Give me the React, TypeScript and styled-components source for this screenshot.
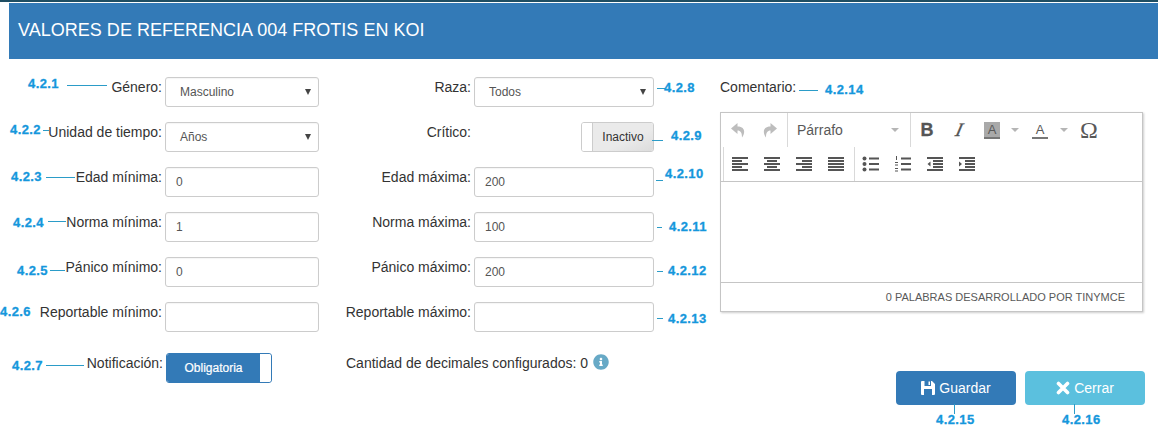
import React from "react";
import styled, { createGlobalStyle } from "styled-components";
import { FaInfoCircle } from "react-icons/fa";

const Global = createGlobalStyle`
  html, body { margin: 0; padding: 0; background: #fff; }
  body { font-family: "Liberation Sans", Arial, sans-serif; color: #333; font-size: 14px; }
  * { box-sizing: border-box; }
`;

const Page = styled.div`
  position: relative;
  width: 1158px;
  height: 427px;
  overflow: hidden;
  background: #fff;
`;
const TopLine = styled.div`
  height: 2px;
  margin-bottom: 1px;
  background: #1f4e63;
`;
const Header = styled.h1`
  margin: 0 0 18px 9px;
  height: 56px;
  background: #337ab7;
  color: #fff;
  font-size: 18px;
  font-weight: 400;
  line-height: 54px;
  padding-left: 9px;
  letter-spacing: 0.02px;
`;
const Body = styled.div`
  display: flex;
  align-items: flex-start;
`;
const Column = styled.div<{ $width: number; $gap: number }>`
  width: ${(p) => p.$width}px;
  margin-right: ${(p) => p.$gap}px;
  flex: none;
  display: flex;
  flex-direction: column;
  gap: 15px;
`;
const Row = styled.div`
  display: flex;
  justify-content: flex-end;
  height: 30px;
`;
const Label = styled.label`
  font-size: 14px;
  line-height: 20px;
  color: #333;
  margin-right: 3px;
`;
const SelectBox = styled.div<{ $width: number }>`
  width: ${(p) => p.$width}px;
  height: 30px;
  border: 1px solid #ccc;
  border-radius: 3px;
  box-shadow: inset 0 1px 1px rgba(0, 0, 0, 0.04);
  background: #fff;
  padding: 0 7px 0 14px;
  font-size: 12px;
  line-height: 28px;
  color: #555;
  display: flex;
  justify-content: space-between;
  align-items: center;
`;
const Caret = styled.span`
  width: 0;
  height: 0;
  border-left: 3px solid transparent;
  border-right: 3px solid transparent;
  border-top: 6px solid #444;
`;
const InputBox = styled.div<{ $width: number }>`
  width: ${(p) => p.$width}px;
  height: 30px;
  border: 1px solid #ccc;
  border-radius: 3px;
  box-shadow: inset 0 1px 1px rgba(0, 0, 0, 0.04);
  background: #fff;
  padding: 0 10px;
  font-size: 12px;
  line-height: 29px;
  color: #555;
`;
const SwitchSpacer = styled.span`
  width: 107px;
`;
const InactiveSwitch = styled.div`
  width: 73px;
  height: 30px;
  border: 1px solid #ccc;
  border-radius: 3px;
  display: flex;
  overflow: hidden;
`;
const Knob = styled.span`
  width: 11px;
  background: #fff;
  border-right: 1px solid #ccc;
`;
const SwitchOff = styled.span`
  flex: 1;
  background: linear-gradient(to bottom right, #eaeaea 60%, #dcdcdc);
  font-size: 12px;
  line-height: 28px;
  text-align: center;
  color: #333;
`;
const ActiveSwitch = styled.div`
  width: 106px;
  height: 30px;
  border: 1px solid #337ab7;
  border-radius: 3px;
  display: flex;
  overflow: hidden;
  margin-right: 47px;
`;
const SwitchOn = styled.span`
  flex: 1;
  background: #337ab7;
  color: #fff;
  font-size: 12px;
  line-height: 28px;
  text-align: center;
  -webkit-text-stroke: 0.2px #fff;
`;
const ActiveKnob = styled.span`
  width: 11px;
  background: #fff;
  border-radius: 0 2px 2px 0;
`;
const NotifyRow = styled(Row)`
  margin-top: 6px;
`;
const Decimals = styled.div`
  display: flex;
  align-items: flex-start;
  padding-left: 27px;
  height: 30px;
  margin-top: 6px;
  font-size: 14px;
  line-height: 20px;
  color: #333;
`;
const Info = styled.span`
  color: #67a9c6;
  font-size: 16px;
  margin-left: 5px;
  line-height: 16px;
  margin-top: 1px;
`;
const RightColumn = styled.div`
  width: 423px;
  flex: none;
  display: flex;
  flex-direction: column;
`;
const CommentLabel = styled.div`
  font-size: 14px;
  line-height: 20px;
  height: 35px;
`;
const Editor = styled.div`
  height: 200px;
  border: 1px solid #c5c5c5;
  box-shadow: 1px 1px 2px rgba(0, 0, 0, 0.2);
  display: flex;
  flex-direction: column;
`;
const Toolbar = styled.div`
  height: 69px;
  border-bottom: 1px solid #c5c5c5;
  padding-left: 2px;
  display: flex;
  flex-direction: column;
`;
const ToolRow = styled.div`
  height: 34px;
  display: flex;
  align-items: center;
`;
const ToolGroup = styled.div<{ $sep?: boolean; $left?: boolean; $width?: number; $pad?: number }>`
  display: flex;
  align-items: center;
  height: 100%;
  ${(p) => (p.$width ? `width: ${p.$width}px;` : "")}
  ${(p) => (p.$sep ? "border-right: 1px solid #d9d9d9;" : "")}
  ${(p) => (p.$left ? "border-left: 1px solid #d9d9d9;" : "")}
  ${(p) => (p.$pad ? `padding-right: ${p.$pad}px;` : "")}
`;
const ToolBtn = styled.span<{ $w?: number }>`
  width: ${(p) => p.$w ?? 32}px;
  height: 28px;
  flex: none;
  display: flex;
  align-items: center;
  justify-content: center;
  color: #595959;
`;
const Format = styled.span`
  flex: 1;
  display: flex;
  align-items: center;
  justify-content: space-between;
  padding: 0 11px 0 9px;
  font-size: 14px;
  color: #595959;
`;
const SmallCaret = styled.span`
  width: 0;
  height: 0;
  border-left: 4px solid transparent;
  border-right: 4px solid transparent;
  border-top: 4px solid #b5b5b5;
`;
const BoldGlyph = styled.span`
  font-size: 18px;
  font-weight: 700;
  color: #555;
  -webkit-text-stroke: 0.3px #555;
`;
const ItalicGlyph = styled.span`
  font-family: "Liberation Serif", serif;
  font-size: 19px;
  font-style: italic;
  color: #555;
  display: inline-block;
  transform: skewX(-14deg);
  -webkit-text-stroke: 0.3px #555;
`;
const ColorGlyph = styled.span<{ $bg?: boolean }>`
  width: 16px;
  height: 17px;
  display: flex;
  justify-content: center;
  font-size: 13px;
  line-height: 15px;
  color: #595959;
  border-bottom: 2px solid #777;
  ${(p) => (p.$bg ? "background: #a9a9a9;" : "")}
`;
const OmegaGlyph = styled.span`
  font-family: "Liberation Serif", serif;
  font-size: 24px;
  line-height: 24px;
  color: #595959;
`;
const EditArea = styled.div`
  flex: 1;
`;
const StatusBar = styled.div`
  height: 29px;
  border-top: 1px solid #c5c5c5;
  font-size: 11px;
  line-height: 28px;
  color: #595959;
  text-align: right;
  padding-right: 17px;
`;
const Actions = styled.div`
  display: flex;
  gap: 9px;
  margin-top: 59px;
  margin-left: 176px;
  width: 249px;
`;
const ActionButton = styled.div<{ $bg: string }>`
  width: 120px;
  flex: none;
  height: 34px;
  border-radius: 4px;
  background: ${(p) => p.$bg};
  color: #fff;
  font-size: 14px;
  display: flex;
  align-items: center;
  justify-content: center;
  gap: 4px;
`;
const Tag = styled.span<{ $x: number; $y: number }>`
  position: absolute;
  left: ${(p) => p.$x}px;
  top: ${(p) => p.$y}px;
  font-size: 13px;
  font-weight: 700;
  line-height: 14px;
  letter-spacing: 0.4px;
  color: #1597dc;
  -webkit-text-stroke: 0.3px #1597dc;
  white-space: nowrap;
`;
const Lead = styled.span<{ $x: number; $y: number; $w?: number; $h?: number }>`
  position: absolute;
  left: ${(p) => p.$x}px;
  top: ${(p) => p.$y}px;
  width: ${(p) => p.$w ?? 1}px;
  height: ${(p) => p.$h ?? 1}px;
  background: #2b9cc8;
`;

const Bars = ({ rows }: { rows: [number, number][] }) => (
  <svg width="18" height="16" viewBox="0 0 18 16" fill="#555">
    {rows.map(([x, w], i) => (
      <rect key={i} x={x} y={1 + i * 3} width={w} height="2" />
    ))}
  </svg>
);
const Bullets = () => (
  <svg width="18" height="16" viewBox="0 0 18 16" fill="#555">
    <circle cx="2.500" cy="2.500" r="2" />
    <circle cx="2.500" cy="8" r="2" />
    <circle cx="2.500" cy="13.500" r="2" />
    <rect x="7" y="1.500" width="10" height="2" />
    <rect x="7" y="7" width="10" height="2" />
    <rect x="7" y="12.500" width="10" height="2" />
  </svg>
);
const Numbers = () => (
  <svg width="18" height="16" viewBox="0 0 18 16" fill="#555">
    <rect x="2" y="0" width="1" height="4" />
    <rect x="1" y="6" width="3" height="1" />
    <rect x="1" y="8.500" width="3" height="1" />
    <rect x="1" y="12" width="3" height="1" />
    <rect x="1" y="14.500" width="3" height="1" />
    <rect x="7" y="1.500" width="10" height="2" />
    <rect x="7" y="7" width="10" height="2" />
    <rect x="7" y="12.500" width="10" height="2" />
  </svg>
);
const Indent = ({ flip }: { flip?: boolean }) => (
  <svg width="18" height="16" viewBox="0 0 18 16" fill="#555">
    <rect x="1" y="1" width="16" height="2" />
    <rect x="7" y="4" width="10" height="2" />
    <rect x="7" y="7" width="10" height="2" />
    <rect x="7" y="10" width="10" height="2" />
    <rect x="1" y="13" width="16" height="2" />
    <path d={flip ? "M1 5.500v5l3-2.500z" : "M4.500 5.500v5l-3-2.500z"} />
  </svg>
);
const Arrow = ({ redo }: { redo?: boolean }) => (
  <svg width="14" height="15" viewBox="0 0 14 15" fill="#bdbdbd" style={redo ? { transform: "scaleX(-1)" } : undefined}>
    <path d="M6.500 0 0 5.500 6.500 11V7.500c3 0 4.500 2 4.500 7 3-3.500 4-11-4.500-11z" />
  </svg>
);
const SaveIcon = () => (
  <svg width="14" height="14" viewBox="0 0 14 14" fill="#fff">
    <path
      fillRule="evenodd"
      d="M1 0h10l3 3v10a1 1 0 0 1-1 1H1a1 1 0 0 1-1-1V1a1 1 0 0 1 1-1zM3.500 0v5h6.500V0zM3 8v6h8V8z"
    />
    <rect x="7.500" y="0.500" width="1.500" height="3.500" />
  </svg>
);
const CloseIcon = () => (
  <svg width="14" height="14" viewBox="0 0 14 14" stroke="#fff" strokeWidth="3.600" strokeLinecap="round">
    <path d="M2.500 2.500 11.500 11.500M11.500 2.500 2.500 11.500" />
  </svg>
);

const leftFields: [string, React.ReactNode][] = [
  ["Género:", <SelectBox $width={154} key="a">Masculino<Caret /></SelectBox>],
  ["Unidad de tiempo:", <SelectBox $width={154} key="b">Años<Caret /></SelectBox>],
  ["Edad mínima:", <InputBox $width={154} key="c">0</InputBox>],
  ["Norma mínima:", <InputBox $width={154} key="d">1</InputBox>],
  ["Pánico mínimo:", <InputBox $width={154} key="e">0</InputBox>],
  ["Reportable mínimo:", <InputBox $width={154} key="f" />],
];
const midFields: [string, React.ReactNode][] = [
  ["Raza:", <SelectBox $width={180} key="a">Todos<Caret /></SelectBox>],
  ["Crítico:", null],
  ["Edad máxima:", <InputBox $width={180} key="c">200</InputBox>],
  ["Norma máxima:", <InputBox $width={180} key="d">100</InputBox>],
  ["Pánico máximo:", <InputBox $width={180} key="e">200</InputBox>],
  ["Reportable máximo:", <InputBox $width={180} key="f" />],
];

const tags: [string, number, number][] = [
  ["4.2.1", 28, 77], ["4.2.2", 10, 123], ["4.2.3", 11, 170], ["4.2.4", 13, 216], ["4.2.5", 17, 264],
  ["4.2.6", 0, 305], ["4.2.7", 12, 359], ["4.2.8", 664, 81], ["4.2.9", 671, 129], ["4.2.10", 665, 167],
  ["4.2.11", 669, 220], ["4.2.12", 668, 264], ["4.2.13", 668, 312], ["4.2.14", 825, 83], ["4.2.15", 936, 413], ["4.2.16", 1062, 413],
];
const leads: [number, number, number, number][] = [
  [67, 85, 40, 1], [43, 130, 6, 1], [46, 177, 29, 1], [48, 221, 18, 1], [50, 270, 15, 1], [46, 365, 38, 1],
  [657, 88, 8, 1], [652, 140, 11, 1], [656, 180, 7, 1], [657, 227, 5, 1], [657, 271, 6, 1], [657, 318, 6, 1],
  [799, 90, 19, 1], [954, 404, 1, 10], [1074, 404, 1, 10],
];

export default function App() {
  return (
    <Page>
      <Global />
      <TopLine />
      <Header>VALORES DE REFERENCIA 004 FROTIS EN KOI</Header>
      <Body>
        <Column $width={319} $gap={0}>
          {leftFields.map(([l, c]) => (
            <Row key={String(l)}>
              <Label>{l}</Label>
              {c}
            </Row>
          ))}
          <NotifyRow>
            <Label>Notificación:</Label>
            <ActiveSwitch>
              <SwitchOn>Obligatoria</SwitchOn>
              <ActiveKnob />
            </ActiveSwitch>
          </NotifyRow>
        </Column>
        <Column $width={335} $gap={66}>
          {midFields.map(([l, c]) => (
            <Row key={String(l)}>
              <Label>{l}</Label>
              {c ?? (
                <>
                  <SwitchSpacer />
                  <InactiveSwitch>
                    <Knob />
                    <SwitchOff>Inactivo</SwitchOff>
                  </InactiveSwitch>
                </>
              )}
            </Row>
          ))}
          <Decimals>
            Cantidad de decimales configurados: 0
            <Info><FaInfoCircle /></Info>
          </Decimals>
        </Column>
        <RightColumn>
          <CommentLabel>Comentario:</CommentLabel>
          <Editor>
            <Toolbar>
              <ToolRow>
                <ToolGroup $sep>
                  <ToolBtn $w={29}><Arrow /></ToolBtn>
                  <ToolBtn $w={35}><Arrow redo /></ToolBtn>
                </ToolGroup>
                <ToolGroup $sep $width={123}>
                  <Format>Párrafo<SmallCaret /></Format>
                </ToolGroup>
                <ToolGroup>
                  <ToolBtn $w={32}><BoldGlyph>B</BoldGlyph></ToolBtn>
                  <ToolBtn $w={32}><ItalicGlyph>I</ItalicGlyph></ToolBtn>
                  <ToolBtn $w={34}><ColorGlyph $bg>A</ColorGlyph></ToolBtn>
                  <ToolBtn $w={12}><SmallCaret /></ToolBtn>
                  <ToolBtn $w={38}><ColorGlyph>A</ColorGlyph></ToolBtn>
                  <ToolBtn $w={10}><SmallCaret /></ToolBtn>
                  <ToolBtn $w={40}><OmegaGlyph>Ω</OmegaGlyph></ToolBtn>
                </ToolGroup>
              </ToolRow>
              <ToolRow>
                <ToolGroup $sep $left $pad={2}>
                  <ToolBtn $w={32}><Bars rows={[[1, 16], [1, 10], [1, 16], [1, 10], [1, 16]]} /></ToolBtn>
                  <ToolBtn $w={32}><Bars rows={[[1, 16], [4, 10], [1, 16], [4, 10], [1, 16]]} /></ToolBtn>
                  <ToolBtn $w={32}><Bars rows={[[1, 16], [7, 10], [1, 16], [7, 10], [1, 16]]} /></ToolBtn>
                  <ToolBtn $w={32}><Bars rows={[[1, 16], [1, 16], [1, 16], [1, 16], [1, 16]]} /></ToolBtn>
                </ToolGroup>
                <ToolGroup>
                  <ToolBtn $w={32}><Bullets /></ToolBtn>
                  <ToolBtn $w={32}><Numbers /></ToolBtn>
                  <ToolBtn $w={32}><Indent /></ToolBtn>
                  <ToolBtn $w={32}><Indent flip /></ToolBtn>
                </ToolGroup>
              </ToolRow>
            </Toolbar>
            <EditArea />
            <StatusBar>0 PALABRAS DESARROLLADO POR TINYMCE</StatusBar>
          </Editor>
          <Actions>
            <ActionButton $bg="#337ab7"><SaveIcon /> Guardar</ActionButton>
            <ActionButton $bg="#5bc0de"><CloseIcon /> Cerrar</ActionButton>
          </Actions>
        </RightColumn>
      </Body>
      {tags.map(([t, x, y]) => (
        <Tag key={t} $x={x} $y={y}>{t}</Tag>
      ))}
      {leads.map(([x, y, w, h], i) => (
        <Lead key={i} $x={x} $y={y} $w={w} $h={h} />
      ))}
    </Page>
  );
}
